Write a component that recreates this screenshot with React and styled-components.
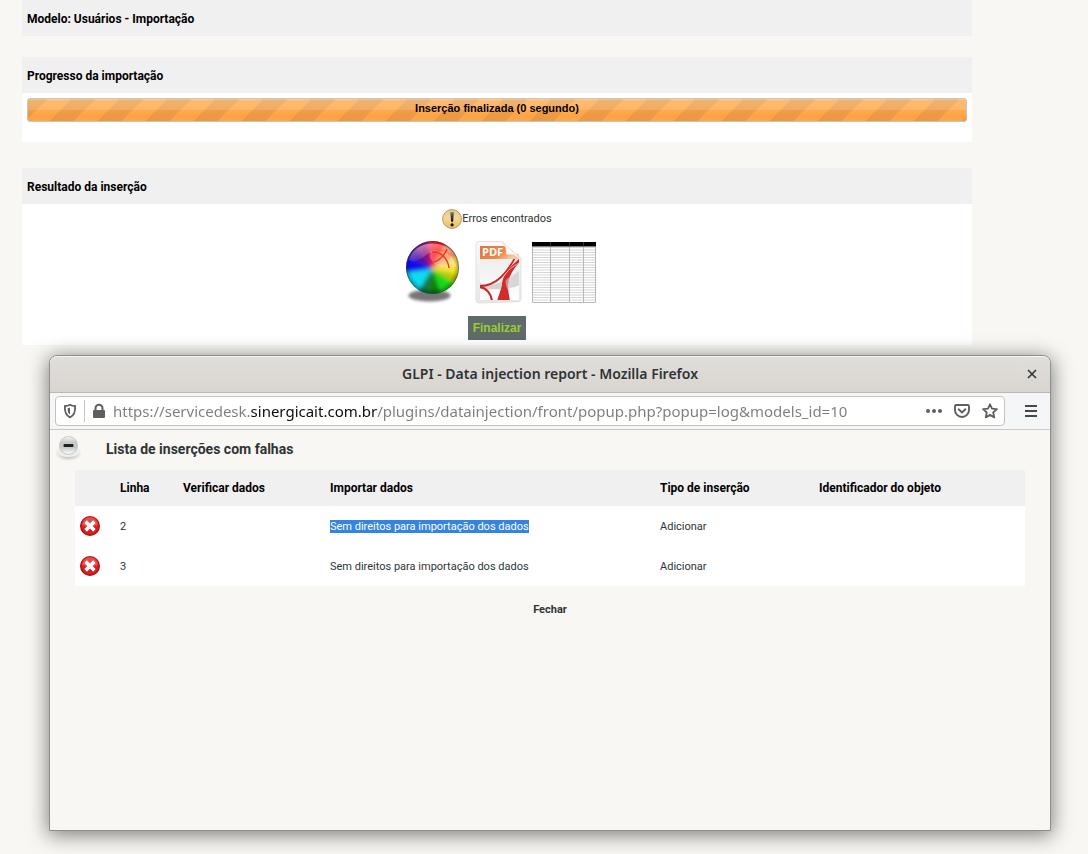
import React from "react";
import styled, { createGlobalStyle, css } from "styled-components";

const GlobalStyle = createGlobalStyle`
  * { box-sizing: border-box; }
  body {
    margin: 0;
    background: #f8f7f3;
    color: #2e3436;
    font-family: Roboto, "Liberation Sans", sans-serif;
    font-size: 11px;
    line-height: 14px;
  }
`;

const Page = styled.div`
  position: relative;
  min-height: 100vh;
  overflow: hidden;
`;

const Main = styled.main`
  padding: 0 116px 0 22px;
`;

const Section = styled.section`
  background: #fff;
  margin-bottom: ${(p) => p.$gap || 0}px;
`;

const SectionTitle = styled.h2`
  margin: 0;
  padding: 12px 5px 10px;
  background: #f0f0f0;
  color: #000;
  font-size: 12px;
  line-height: 14px;
  font-weight: 700;
`;

const ProgressArea = styled.div`
  padding: 5px 5px 20px;
`;

const ProgressBar = styled.div`
  height: 24px;
  padding-top: 1px;
  border: 1px solid #c3c6c8;
  border-radius: 3px;
  text-align: center;
  font: 700 11px/16px "Liberation Sans", Arial, sans-serif;
  color: #000;
  background:
    linear-gradient(rgba(255, 255, 255, 0.4) 1px, rgba(255, 255, 255, 0.24) 1px, rgba(255, 255, 255, 0.18) 11px, rgba(255, 255, 255, 0.05) 11px, transparent 16px),
    linear-gradient(135deg, #ed9942 25%, transparent 25%, transparent 50%, #ed9942 50%, #ed9942 75%, transparent 75%) -4px 0 / 48px 48px,
    #ffa546;
`;

const Result = styled.div`
  display: flex;
  flex-direction: column;
  align-items: center;
  padding: 5px;
`;

const Status = styled.p`
  display: flex;
  align-items: center;
  height: 20px;
  margin: 0 0 11px;
`;

const Exports = styled.div`
  display: flex;
  gap: 3px;
  margin-bottom: 12px;
`;

const PlainButton = styled.button`
  display: block;
  padding: 0;
  border: 0;
  background: none;
  color: inherit;
  font: inherit;
  cursor: pointer;
  svg { display: block; }
`;

const FinishButton = styled(PlainButton)`
  height: 24px;
  padding: 0 5px;
  background: #5f6a6a;
  color: #9acd32;
  font: 700 12px/24px "Liberation Sans", Arial, sans-serif;
`;

const Window = styled.div`
  position: absolute;
  top: 355px;
  left: 49px;
  right: 37px;
  bottom: 23px;
  min-height: 280px;
  display: flex;
  flex-direction: column;
  border: 1px solid #8d8f8a;
  border-radius: 8px 8px 0 0;
  background: #f8f7f3;
  box-shadow: 0 3px 20px 1px rgba(0, 0, 0, 0.5);
  overflow: hidden;
`;

const TitleBar = styled.header`
  display: grid;
  grid-template-columns: 36px 1fr 36px;
  align-items: center;
  height: 37px;
  border-bottom: 1px solid #bfb8b1;
  border-radius: 7px 7px 0 0;
  background: linear-gradient(#e1dedb, #d9d5d0);
  box-shadow: inset 0 1px #f7f6f5;
`;

const WindowTitle = styled.h1`
  grid-column: 2;
  margin: 0;
  text-align: center;
  color: #2e3436;
  font: 600 14px/22px "Noto Sans", sans-serif;
`;

const CloseButton = styled(PlainButton)`
  justify-self: center;
`;

const Toolbar = styled.nav`
  display: flex;
  align-items: center;
  height: 37px;
  padding: 0 12px 0 5px;
  gap: 19px;
  border-bottom: 1px solid #ccc8c3;
  background: #f5f6f7;
`;

const AddressBar = styled.div`
  flex: 1;
  display: flex;
  align-items: center;
  height: 30px;
  padding: 0 6px;
  border: 1px solid #c8c2bb;
  border-radius: 4px;
  background: #fff;
`;

const Divider = styled.span`
  width: 1px;
  height: 22px;
  margin: 0 6px;
  background: #ccc6c0;
`;

const UrlInput = styled.input`
  flex: 1;
  min-width: 0;
  height: 24px;
  margin-left: 6px;
  padding: 0;
  border: 0;
  outline: 0;
  font: 400 15px/24px "Noto Sans", sans-serif;
  -webkit-text-fill-color: transparent;
  background: linear-gradient(90deg, #7c7c7d 137px, #0c0c0d 137px, #0c0c0d 264px, #7c7c7d 264px);
  -webkit-background-clip: text;
  background-clip: text;
`;

const UrlActions = styled.div`
  display: flex;
  gap: 12px;
`;

const Content = styled.div`
  padding: 6px 25px 0;
`;

const ListHeading = styled.div`
  display: flex;
  align-items: flex-start;
  gap: 24px;
  margin: 0 0 8px -19px;
`;

const ListTitle = styled.h2`
  margin: 0;
  padding-top: 5px;
  font-size: 14px;
  line-height: 16px;
  font-weight: 700;
`;

const Table = styled.table`
  width: 100%;
  table-layout: fixed;
  border-collapse: collapse;
  text-align: left;
  background: #fff;
`;

const Col = styled.col`
  ${(p) => p.$width && css`width: ${p.$width}px;`}
`;

const Head = styled.th`
  height: 36px;
  padding: 0 5px;
  background: #f0f0f0;
  color: #000;
  font-size: 12px;
  font-weight: 700;
`;

const Cell = styled.td`
  height: 40px;
  padding: 2px 5px 0;
`;

const IconCell = styled(Cell)`
  padding: 0 5px;
  svg { display: block; }
`;

const Marked = styled.mark`
  background: #3584e4;
  color: #fff;
`;

const Footer = styled.div`
  display: flex;
  justify-content: center;
  padding-top: 17px;
`;

const CloseLink = styled.a`
  color: inherit;
  font-weight: 700;
  text-decoration: none;
`;

function WarningIcon() {
  return (
    <svg width="20" height="20" viewBox="0 0 20 20" aria-hidden="true">
      <defs>
        <linearGradient id="warn" x1="0" y1="0" x2="0" y2="1">
          <stop offset="0" stopColor="#e8c78c" />
          <stop offset=".45" stopColor="#f3d79c" />
          <stop offset="1" stopColor="#f0bd52" />
        </linearGradient>
        <linearGradient id="bang" x1="0" y1="0" x2="0" y2="1">
          <stop offset="0" stopColor="#6f7577" />
          <stop offset="1" stopColor="#080808" />
        </linearGradient>
      </defs>
      <circle cx="10" cy="10" r="9.4" fill="url(#warn)" stroke="#b8985e" />
      <path d="M8.3 3.2h3.6l-.8 9.6H9.2z" fill="url(#bang)" />
      <circle cx="10.1" cy="15.8" r="1.6" fill="#111" />
    </svg>
  );
}

const WHEEL = [
  [-8, 32, "#ff1010"],
  [32, 62, "#f88a60"],
  [62, 84, "#ffd84a"],
  [84, 102, "#f2e620"],
  [102, 122, "#b8c400"],
  [122, 160, "#12d818"],
  [160, 188, "#0a7d10"],
  [188, 212, "#0a7a3c"],
  [212, 262, "#10dcf0"],
  [262, 298, "#0c10ee"],
  [298, 325, "#4a0c9c"],
  [325, 352, "#8c0c78"],
];

function WheelIcon() {
  const point = (deg) => {
    const a = (deg * Math.PI) / 180;
    return `${34 + 44 * Math.sin(a)} ${29 - 44 * Math.cos(a)}`;
  };
  return (
    <svg width="64" height="64" viewBox="0 0 64 64" aria-hidden="true">
      <defs>
        <clipPath id="ball"><circle cx="34.500" cy="27.500" r="26.500" /></clipPath>
        <filter id="soft" x="-20%" y="-20%" width="140%" height="140%"><feGaussianBlur stdDeviation="2.200" /></filter>
        <filter id="softShadow" x="-20%" y="-50%" width="140%" height="200%"><feGaussianBlur stdDeviation="1.500" /></filter>
        <radialGradient id="rim" cx=".5" cy=".48" r=".54">
          <stop offset=".75" stopColor="#000" stopOpacity="0" />
          <stop offset="1" stopColor="#000" stopOpacity=".4" />
        </radialGradient>
        <linearGradient id="gloss" x1=".2" y1="0" x2=".5" y2="1">
          <stop offset="0" stopColor="#fff" stopOpacity=".5" />
          <stop offset="1" stopColor="#fff" stopOpacity=".04" />
        </linearGradient>
      </defs>
      <ellipse cx="31.500" cy="55.500" rx="21" ry="6" fill="#555" opacity=".8" filter="url(#softShadow)" />
      <g clipPath="url(#ball)">
        <g filter="url(#soft)">
          {WHEEL.map(([from, to, color]) => (
            <path key={color} fill={color} d={`M34 29L${point(from)}L${point(to)}Z`} />
          ))}
        </g>
        <circle cx="34.500" cy="27.500" r="26.500" fill="url(#rim)" />
        <path d="M11 20C16 0 46-2 57 15C46 7 34 10 27 16C22 20 15 23 11 20Z" fill="url(#gloss)" />
        <path d="M33 11C44 7 54 14 59 27C52 27 42 30 35 22C31 18 31 14 33 11Z" fill="#fff" opacity=".28" />
        <path d="M34 12C43 11 50 19 51 28M35 22C41 21 46 16 49 9" fill="none" stroke="#f03c10" strokeWidth="1.500" />
      </g>
      <circle cx="34.500" cy="27.500" r="26" fill="none" stroke="#26485a" strokeOpacity=".5" />
    </svg>
  );
}

function PdfIcon() {
  return (
    <svg width="64" height="64" viewBox="0 0 64 64" aria-hidden="true">
      <defs>
        <linearGradient id="paper" x1="0" y1="0" x2="0" y2="1">
          <stop offset="0" stopColor="#fafafa" />
          <stop offset="1" stopColor="#e6e6e6" />
        </linearGradient>
        <linearGradient id="flag" x1="0" y1="0" x2="1" y2=".4">
          <stop offset="0" stopColor="#e37439" />
          <stop offset=".65" stopColor="#ea8848" />
          <stop offset="1" stopColor="#f8c8a0" />
        </linearGradient>
        <linearGradient id="leaf" x1="0" y1="0" x2="0" y2="1">
          <stop offset="0" stopColor="#eeeeee" />
          <stop offset="1" stopColor="#fff" />
        </linearGradient>
        <clipPath id="sheet"><rect x="15" y="19" width="39" height="41" /></clipPath>
      </defs>
      <path d="M14 1.500H37L56 18V58.500Q56 61.500 53 61.700L14 63Q11 63 11 60V4.500Q11 1.500 14 1.500Z" fill="url(#paper)" stroke="#e2e2e2" />
      <rect x="15" y="19" width="39" height="41" fill="url(#leaf)" />
      <g clipPath="url(#sheet)">
        <path d="M15 43C26 48 42 42 54 31V45C48 49 28 50 15 49Z" fill="#d4d4d4" />
        <path d="M15 46C32 46 42 32 50 18" fill="none" stroke="#ce2524" strokeWidth="1.800" />
        <path d="M15 47C21 48 26 53 27 61" fill="none" stroke="#ce2524" strokeWidth="2.200" />
        <path d="M55 18V22C48 29 44 36 43 45C43 51 44 55 45 61H32C34 54 36 50 37 45C37 35 45 27 55 18Z" fill="#d22b29" />
        <path d="M41 40C45 36 50 33 54 30V44Q48 46 43 50C41 47 40 43 41 40Z" fill="#d9d9d9" opacity=".55" />
        <path d="M39 36C43 30 47 27 54 23" fill="none" stroke="#fff" strokeWidth="1" opacity=".6" />
      </g>
      <path d="M15 6H41V14H54V19H15Z" fill="url(#flag)" />
      <path d="M37 2Q42 7 42 14Q49 13 55 18Z" fill="#fbfbfb" stroke="#e9e9e9" />
      <text x="17" y="16" fill="#fff" fontFamily="Open Sans, sans-serif" fontWeight="700" fontSize="11">PDF</text>
    </svg>
  );
}

function SheetIcon() {
  const rows = Array.from({ length: 22 }, (_, i) => 7.500 + i * 2.500);
  return (
    <svg width="64" height="64" viewBox="0 0 64 64" aria-hidden="true">
      {rows.map((y) => (
        <path key={y} d={`M0 ${y}H64`} stroke="#d0d0d0" strokeWidth=".900" />
      ))}
      <path d="M.5 2V62.500H63.500V2M18.500 2V63M37.500 2V63M51.500 2V63" fill="none" stroke="#b9b9b9" />
      <path d="M0 2H64V6.500H0Z" fill="#000" />
      <path d="M18.500 2V6M37.500 2V6M51.500 2V6" stroke="#333" />
    </svg>
  );
}

function CloseIcon() {
  return (
    <svg width="16" height="16" viewBox="0 0 16 16" aria-hidden="true">
      <path d="M4 4L12 12M12 4L4 12" stroke="#2e3436" strokeWidth="1.600" />
    </svg>
  );
}

function ShieldIcon() {
  return (
    <svg width="16" height="16" viewBox="0 0 16 16" aria-hidden="true">
      <path d="M8 1.700C6.300 2.700 4.600 3 2.900 3C2.600 8.500 3.300 12 8 14.300C12.700 12 13.400 8.500 13.100 3C11.400 3 9.700 2.700 8 1.700Z" fill="none" stroke="#5f5f60" strokeWidth="1.900" strokeLinejoin="round" />
      <path d="M8 4.600C7.200 5 6.500 5.100 5.600 5.200C5.600 8.300 6 10.200 8 11.600Z" fill="#5f5f60" />
    </svg>
  );
}

function LockIcon() {
  return (
    <svg width="16" height="16" viewBox="0 0 16 16" aria-hidden="true">
      <path d="M4.500 8V5.200A3.500 3.500 0 0 1 11.500 5.200V8" fill="none" stroke="#5f5f60" strokeWidth="2" />
      <rect x="2" y="7" width="12" height="8" rx="1" fill="#5f5f60" />
    </svg>
  );
}

function DotsIcon() {
  return (
    <svg width="16" height="16" viewBox="0 0 16 16" fill="#5f5f60" aria-hidden="true">
      <circle cx="2" cy="8" r="2" />
      <circle cx="8" cy="8" r="2" />
      <circle cx="14" cy="8" r="2" />
    </svg>
  );
}

function PocketIcon() {
  return (
    <svg width="16" height="16" viewBox="0 0 16 16" fill="none" stroke="#5f5f60" strokeWidth="1.900" aria-hidden="true">
      <path d="M2.200 2H13.800Q15 2 15 3.200V7A7 7 0 0 1 1 7V3.200Q1 2 2.200 2Z" />
      <path d="M4.600 6.300L8 9.500L11.400 6.300" strokeLinecap="round" strokeLinejoin="round" />
    </svg>
  );
}

function StarIcon() {
  return (
    <svg width="16" height="16" viewBox="0 0 16 16" aria-hidden="true">
      <path d="M8 1.300L10 5.700L14.900 6.200L11.200 9.500L12.300 14.400L8 11.900L3.700 14.400L4.800 9.500L1.100 6.200L6 5.700Z" fill="none" stroke="#5f5f60" strokeWidth="1.800" strokeLinejoin="round" />
    </svg>
  );
}

function MenuIcon() {
  return (
    <svg width="14" height="16" viewBox="0 0 14 16" aria-hidden="true">
      <path d="M1 3H13M1 8H13M1 13H13" stroke="#45494b" strokeWidth="2" />
    </svg>
  );
}

function CollapseIcon() {
  return (
    <svg width="26" height="26" viewBox="0 0 26 26" aria-hidden="true">
      <defs>
        <linearGradient id="knob" x1="0" y1="0" x2="0" y2="1">
          <stop offset="0" stopColor="#fafafa" />
          <stop offset=".3" stopColor="#cacaca" />
          <stop offset=".6" stopColor="#c4c7c8" />
          <stop offset="1" stopColor="#fff" />
        </linearGradient>
        <radialGradient id="base">
          <stop offset=".5" stopColor="#c4c4c2" />
          <stop offset="1" stopColor="#d9d8d5" stopOpacity=".2" />
        </radialGradient>
      </defs>
      <ellipse cx="12.500" cy="17.500" rx="12.500" ry="7.500" fill="url(#base)" />
      <ellipse cx="12.500" cy="15.500" rx="11" ry="5.500" fill="#eeeeec" />
      <circle cx="12.500" cy="9.500" r="9" fill="url(#knob)" stroke="#c6c6c6" />
      <rect x="7.500" y="8" width="10" height="3" rx="1" fill="#1d2021" />
    </svg>
  );
}

function ErrorIcon() {
  return (
    <svg width="20" height="20" viewBox="0 0 20 20" aria-hidden="true">
      <circle cx="10" cy="10" r="9.300" fill="#d81e1e" stroke="#ad1212" strokeWidth="1.400" />
      <path d="M2 9A8 8 0 0 1 18 9Q10 13 2 9Z" fill="#ef6a6a" opacity=".6" />
      <path d="M6.900 6.900L13.100 13.100M13.100 6.900L6.900 13.100" stroke="#fff" strokeWidth="3.600" strokeLinecap="square" />
    </svg>
  );
}

const ROWS = [
  { line: 2, message: "Sem direitos para importação dos dados", type: "Adicionar", selected: true },
  { line: 3, message: "Sem direitos para importação dos dados", type: "Adicionar" },
];

function ReportTable() {
  return (
    <Table>
      <colgroup>
        <Col $width={40} />
        <Col $width={63} />
        <Col $width={147} />
        <Col $width={330} />
        <Col $width={159} />
        <Col />
      </colgroup>
      <thead>
        <tr>
          <Head aria-label="Estado" />
          <Head>Linha</Head>
          <Head>Verificar dados</Head>
          <Head>Importar dados</Head>
          <Head>Tipo de inserção</Head>
          <Head>Identificador do objeto</Head>
        </tr>
      </thead>
      <tbody>
        {ROWS.map((row) => (
          <tr key={row.line}>
            <IconCell><ErrorIcon /></IconCell>
            <Cell>{row.line}</Cell>
            <Cell />
            <Cell>{row.selected ? <Marked>{row.message}</Marked> : row.message}</Cell>
            <Cell>{row.type}</Cell>
            <Cell />
          </tr>
        ))}
      </tbody>
    </Table>
  );
}

export default function App() {
  return (
    <Page>
      <GlobalStyle />
      <Main>
        <Section $gap={21}>
          <SectionTitle>Modelo: Usuários - Importação</SectionTitle>
        </Section>
        <Section $gap={26}>
          <SectionTitle>Progresso da importação</SectionTitle>
          <ProgressArea>
            <ProgressBar role="progressbar" aria-valuenow={100}>Inserção finalizada (0 segundo)</ProgressBar>
          </ProgressArea>
        </Section>
        <Section>
          <SectionTitle>Resultado da inserção</SectionTitle>
          <Result>
            <Status><WarningIcon />Erros encontrados</Status>
            <Exports>
              <PlainButton aria-label="Ver o relatório"><WheelIcon /></PlainButton>
              <PlainButton aria-label="Exportar em PDF"><PdfIcon /></PlainButton>
              <PlainButton aria-label="Exportar em CSV"><SheetIcon /></PlainButton>
            </Exports>
            <FinishButton>Finalizar</FinishButton>
          </Result>
        </Section>
      </Main>
      <Window>
        <TitleBar>
          <WindowTitle>GLPI - Data injection report - Mozilla Firefox</WindowTitle>
          <CloseButton aria-label="Fechar janela"><CloseIcon /></CloseButton>
        </TitleBar>
        <Toolbar>
          <AddressBar>
            <PlainButton aria-label="Proteção"><ShieldIcon /></PlainButton>
            <Divider />
            <PlainButton aria-label="Segurança"><LockIcon /></PlainButton>
            <UrlInput
              aria-label="Endereço"
              defaultValue="https://servicedesk.sinergicait.com.br/plugins/datainjection/front/popup.php?popup=log&models_id=10"
            />
            <UrlActions>
              <PlainButton aria-label="Ações"><DotsIcon /></PlainButton>
              <PlainButton aria-label="Pocket"><PocketIcon /></PlainButton>
              <PlainButton aria-label="Favoritos"><StarIcon /></PlainButton>
            </UrlActions>
          </AddressBar>
          <PlainButton aria-label="Menu"><MenuIcon /></PlainButton>
        </Toolbar>
        <Content>
          <ListHeading>
            <PlainButton aria-label="Recolher"><CollapseIcon /></PlainButton>
            <ListTitle>Lista de inserções com falhas</ListTitle>
          </ListHeading>
          <ReportTable />
          <Footer><CloseLink href="#fechar">Fechar</CloseLink></Footer>
        </Content>
      </Window>
    </Page>
  );
}
